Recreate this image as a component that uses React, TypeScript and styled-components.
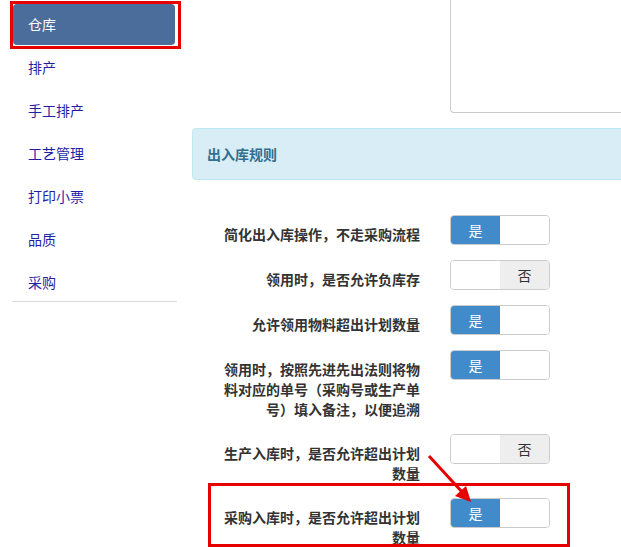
import React from "react";
import styled, { createGlobalStyle } from "styled-components";

type Rule = {
  label: string;
  on: boolean;
};

const menu = ["仓库", "排产", "手工排产", "工艺管理", "打印小票", "品质", "采购"];

const rules: Rule[] = [
  { label: "简化出入库操作，不走采购流程", on: true },
  { label: "领用时，是否允许负库存", on: false },
  { label: "允许领用物料超出计划数量", on: true },
  { label: "领用时，按照先进先出法则将物料对应的单号（采购号或生产单号）填入备注，以便追溯", on: true },
  { label: "生产入库时，是否允许超出计划数量", on: false },
  { label: "采购入库时，是否允许超出计划数量", on: true },
];

const App: React.FC = () => {
  return (
    <>
      <GlobalStyle />
      <Page>
        <Sidebar>
          <Nav>
            {menu.map((item, i) => (
              <NavItem key={item} active={i === 0}>
                {item}
              </NavItem>
            ))}
          </Nav>
        </Sidebar>

        <Main>
          <TextBox />
          <PanelHeading>出入库规则</PanelHeading>
          <Form>
            {rules.map((rule) => (
              <Row key={rule.label}>
                <Label>{rule.label}</Label>
                <Toggle>
                  <Half on={rule.on} side="left">{rule.on ? "是" : ""}</Half>
                  <Half on={rule.on} side="right">{rule.on ? "" : "否"}</Half>
                </Toggle>
              </Row>
            ))}
          </Form>
        </Main>

        {/* annotation overlays */}
        <MarkBox style={{ left: 10, top: 1, width: 171, height: 48 }} />
        <MarkBox style={{ left: 208, top: 483, width: 362, height: 64 }} />
        <Arrow width="60" height="60" viewBox="0 0 60 60">
          <line x1="4" y1="4" x2="38" y2="41" stroke="#e60000" strokeWidth="3" />
          <polygon points="46,50 30,44 41,34" fill="#e60000" />
        </Arrow>
      </Page>
    </>
  );
};

export default App;

// Styled Components

const GlobalStyle = createGlobalStyle`
  html, body {
    margin: 0;
    padding: 0;
    background: #fff;
  }
  body {
    font-family: "Noto Sans CJK SC", "Liberation Sans", sans-serif;
    font-size: 14px;
    color: #333;
  }
`;

const Page = styled.div`
  position: relative;
  display: flex;
  width: 621px;
  height: 547px;
  overflow: hidden;
`;

const Sidebar = styled.div`
  width: 192px;
  flex-shrink: 0;
  padding: 4px 0 0 12px;
  box-sizing: border-box;
`;

const Nav = styled.ul`
  list-style: none;
  margin: 0;
  padding: 0;
  width: 165px;
  border-bottom: 1px solid #ddd;
`;

const NavItem = styled.li<{ active?: boolean }>`
  margin: 0 2px 2px 1px;
  padding: 10px 15px;
  height: 21px;
  line-height: 20px;
  font-size: 14px;
  border-radius: 4px;
  color: ${(p) => (p.active ? "#fff" : "#1f1fa6")};
  background: ${(p) => (p.active ? "#4a6d9b" : "transparent")};

  &:last-child {
    margin-bottom: 0;
    height: 19px;
  }
`;

const Main = styled.div`
  flex: 1;
  min-width: 0;
`;

const TextBox = styled.div`
  margin: -20px 0 0 258px;
  height: 133px;
  border: 1px solid #ccc;
  border-right: none;
  border-radius: 0 0 0 4px;
  box-sizing: border-box;
`;

const PanelHeading = styled.div`
  margin-top: 15px;
  width: 460px;
  height: 52px;
  box-sizing: border-box;
  padding: 0 14px;
  display: flex;
  align-items: center;
  background: #d9edf7;
  border: 1px solid #bce8f1;
  border-radius: 4px 0 0 4px;
  color: #31708f;
  font-weight: bold;
  font-size: 14px;
`;

const Form = styled.div`
  padding-top: 35px;
`;

const Row = styled.div`
  display: flex;
  align-items: flex-start;
  margin-bottom: 15px;
`;

const Label = styled.div`
  width: 200px;
  margin-left: 28px;
  padding-top: 9px;
  text-align: right;
  font-weight: bold;
  font-size: 14px;
  line-height: 20px;
  color: #333;
`;

const Toggle = styled.div`
  display: flex;
  margin-left: 30px;
  width: 100px;
  height: 30px;
  box-sizing: border-box;
  border: 1px solid #ccc;
  border-radius: 4px;
  overflow: hidden;
`;

const Half = styled.div<{ on: boolean; side: "left" | "right" }>`
  flex: 1;
  display: flex;
  align-items: center;
  justify-content: center;
  font-size: 14px;
  background: ${(p) =>
    p.side === "left" ? (p.on ? "#428bca" : "#fff") : p.on ? "#fff" : "#eee"};
  color: ${(p) => (p.side === "left" ? "#fff" : "#333")};
`;

const MarkBox = styled.div`
  position: absolute;
  box-sizing: border-box;
  border: 3px solid #e60000;
  pointer-events: none;
`;

const Arrow = styled.svg`
  position: absolute;
  left: 425px;
  top: 452px;
`;
